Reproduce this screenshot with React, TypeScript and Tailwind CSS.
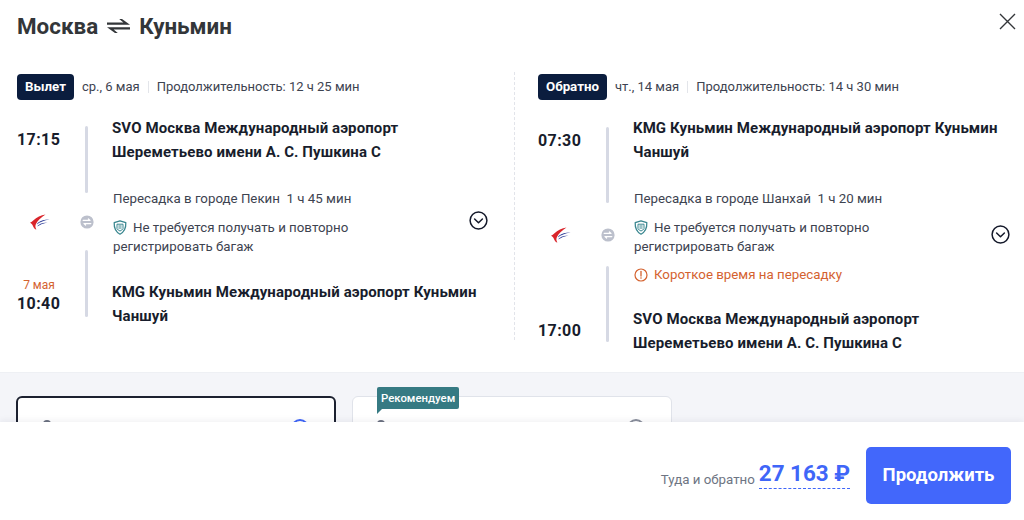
import React from "react";

function SwallowLogo() {
  return (
    <svg width="20" height="16" viewBox="0 0 20 16" className="block">
      <path d="M15.5 0.5C11 1.4 6.5 3.2 3.5 6.2C2.4 7.3 1.2 8.2 0 8.8C1.2 9.4 2.4 10.6 3.2 12.4C3.8 13.8 4.8 15 6.4 15.6C5.2 13.8 5 11.6 6.2 9.6C7.8 6.6 11 3.4 15.5 0.5Z" fill="#d9252b" />
      <path d="M19.5 5.4C15.4 5.2 11 6.2 8.2 8.4C7.4 9 7 9.8 6.8 10.4C9.8 8 14 6.2 19.5 5.4Z" fill="#2b3a97" />
      <path d="M17.5 8.6C14.4 8.6 11 9.4 8.6 11C8 11.4 7.6 11.8 7.4 12.4C10 10.8 13.6 9.4 17.5 8.6Z" fill="#2b3a97" />
    </svg>
  );
}

function Shield() {
  return (
    <svg width="14" height="15" viewBox="0 0 14 15" fill="none" className="block shrink-0">
      <path d="M7 0.8L12.8 2.6C13 6.8 12.2 11.4 7 14.2C1.8 11.4 1 6.8 1.2 2.6L7 0.8Z" stroke="#3a8790" strokeWidth="1.3" strokeLinejoin="round" />
      <path d="M4 4.2H10V8.6C9.4 9.8 8.2 10.6 7 11C5.8 10.6 4.6 9.8 4 8.6V4.2Z" stroke="#3a8790" strokeWidth="1" />
      <path d="M5.4 6H8.6M5.4 8H8.6" stroke="#3a8790" strokeWidth="1" />
    </svg>
  );
}

function SwapDot() {
  return (
    <svg width="14" height="14" viewBox="0 0 14 14" className="block">
      <circle cx="7" cy="7" r="6.6" fill="#bcc0cc" />
      <path d="M3.2 5.4H10M10 5.4L8.4 4M10.8 8.6H4M4 8.6L5.6 10" stroke="#fff" strokeWidth="1.2" fill="none" strokeLinecap="round" />
    </svg>
  );
}

function Chevron() {
  return (
    <svg width="19" height="19" viewBox="0 0 19 19" fill="none" className="block">
      <circle cx="9.5" cy="9.5" r="8.4" stroke="#14192a" strokeWidth="1.5" />
      <path d="M5.6 8L9.5 11.8L13.4 8" stroke="#14192a" strokeWidth="1.5" strokeLinecap="round" strokeLinejoin="round" />
    </svg>
  );
}

function Warn() {
  return (
    <svg width="14" height="14" viewBox="0 0 14 14" fill="none" className="block shrink-0">
      <circle cx="7" cy="7" r="6" stroke="#d4622f" strokeWidth="1.2" />
      <path d="M7 3.5V8" stroke="#d4622f" strokeWidth="1.3" strokeLinecap="round" />
      <circle cx="7" cy="10" r="0.8" fill="#d4622f" />
    </svg>
  );
}

function Head({ badge, date, dur }: { badge: string; date: string; dur: string }) {
  return (
    <div className="flex items-center h-[26px] text-[13px] leading-[20px] text-[#3d4350] whitespace-nowrap">
      <span className="h-[26px] px-[8px] flex items-center rounded-[4px] bg-[#0b1d3e] text-white font-bold text-[13.3px]">{badge}</span>
      <span className="ml-[8px]">{date}</span>
      <span className="w-px h-[12px] bg-[#e3e5ea] mx-[8px]" />
      <span>{dur}</span>
    </div>
  );
}

const place = "text-[15px] leading-[24px] font-bold text-[#181d2c] whitespace-nowrap tracking-[0.1px]";
const time = "text-[16px] leading-[24px] font-bold text-[#181d2c] tracking-[0.4px]";
const note = "text-[13.3px] leading-[19px] text-[#3d4350] whitespace-nowrap";
const bar = "w-[3px] rounded-full bg-[#d6d9e4]";

export default function App() {
  return (
    <div className="relative h-[520px] w-[1024px] overflow-hidden bg-white font-[Roboto,sans-serif]">
      <div className="flex items-center justify-between h-[56px] pl-[17px] pr-[8px] pb-[4px]">
        <div className="flex items-center text-[22.4px] leading-[30px] font-bold text-[#333639]">
          <span>Москва</span>
          <svg width="23" height="14" viewBox="0 0 23 14" className="mx-[9px] block">
            <path d="M0 5.8H23L15 0H12.2L16.4 3.6H0Z" fill="#333639" />
            <path d="M23 8.2H0L8 14H10.8L6.6 10.4H23Z" fill="#333639" />
          </svg>
          <span>Куньмин</span>
        </div>
        <svg width="17" height="17" viewBox="0 0 17 17" className="block -mt-[10px]">
          <path d="M1 1L16 16M16 1L1 16" stroke="#333639" strokeWidth="1.4" />
        </svg>
      </div>

      <div className="flex h-[316px] pt-[18px]">
        <div className="w-[497px] ml-[17px]">
          <Head badge="Вылет" date="ср., 6 мая" dur="Продолжительность: 12 ч 25 мин" />
          <div className="flex mt-[16px]">
            <div className="w-[68px] flex flex-col">
              <div className={`${time} mt-[12px]`}>17:15</div>
              <div className="mt-[62px] ml-[13px]"><SwallowLogo /></div>
              <div className="mt-[47px] text-[12px] leading-[16px] text-[#d4622f] text-center w-[44px]">7 мая</div>
              <div className={`${time} -mt-px`}>10:40</div>
            </div>
            <div className="w-[27px] flex flex-col">
              <div className={`${bar} h-[67px] mt-[10px]`} />
              <div className="mt-[22px] -ml-[5px]"><SwapDot /></div>
              <div className={`${bar} h-[67px] mt-[21px]`} />
            </div>
            <div className="w-[357px]">
              <div className={place}>SVO Москва Международный аэропорт<br />Шереметьево имени А. С. Пушкина С</div>
              <div className={`${note} mt-[25px] pl-px`}>Пересадка в городе Пекин&nbsp; 1 ч 45 мин</div>
              <div className={`${note} mt-[10px] pl-px`}>
                <div className="flex items-center gap-[6px]"><Shield /><span>Не требуется получать и повторно</span></div>
                <div>регистрировать багаж</div>
              </div>
              <div className={`${place} mt-[24px]`}>KMG Куньмин Международный аэропорт Куньмин<br />Чаншуй</div>
            </div>
            <div className="pt-[95px]"><Chevron /></div>
          </div>
        </div>

        <div className="w-[24px] border-l border-dashed border-[#e2e4ea] h-[268px] -mt-[2px]" />

        <div className="w-[486px]">
          <Head badge="Обратно" date="чт., 14 мая" dur="Продолжительность: 14 ч 30 мин" />
          <div className="flex mt-[16px]">
            <div className="w-[68px] flex flex-col">
              <div className={`${time} mt-[13px]`}>07:30</div>
              <div className="mt-[74px] ml-[13px]"><SwallowLogo /></div>
              <div className={`${time} mt-[76px]`}>17:00</div>
            </div>
            <div className="w-[27px] flex flex-col">
              <div className={`${bar} h-[76px] mt-[11px]`} />
              <div className="mt-[25px] -ml-[5px]"><SwapDot /></div>
              <div className={`${bar} h-[76px] mt-[24px]`} />
            </div>
            <div className="w-[358px]">
              <div className={place}>KMG Куньмин Международный аэропорт Куньмин<br />Чаншуй</div>
              <div className={`${note} mt-[25px] pl-px`}>Пересадка в городе Шанхай&nbsp; 1 ч 20 мин</div>
              <div className={`${note} mt-[10px] pl-px`}>
                <div className="flex items-center gap-[6px]"><Shield /><span>Не требуется получать и повторно</span></div>
                <div>регистрировать багаж</div>
              </div>
              <div className={`${note} mt-[9px] pl-px flex items-center gap-[6px] !text-[#d4622f]`}><Warn /><span>Короткое время на пересадку</span></div>
              <div className={`${place} mt-[23px]`}>SVO Москва Международный аэропорт<br />Шереметьево имени А. С. Пушкина С</div>
            </div>
            <div className="pt-[109px]"><Chevron /></div>
          </div>
        </div>
      </div>

      <div className="h-[148px] bg-[#f4f5f9] border-t border-[#eef0f4] pt-[23px] pl-[16px] flex gap-[16px]">
        <div className="relative w-[320px] h-[120px] rounded-[6px] border-2 border-[#1c2130] bg-white">
          <span className="absolute left-[25px] top-[22px] w-[8px] h-[8px] rounded-full bg-[#6b7180]" />
          <span className="absolute left-[273px] top-[21px] w-[18px] h-[18px] rounded-full border-2 border-[#3f66f8]" />
        </div>
        <div className="relative w-[320px] h-[120px] rounded-[6px] border border-[#e0e3ea] bg-white">
          <span className="absolute left-[24px] top-[23px] w-[8px] h-[8px] rounded-full bg-[#6b7180]" />
          <span className="absolute left-[274px] top-[22px] w-[18px] h-[18px] rounded-full border-2 border-[#8a8f9c]" />
          <div className="absolute left-[24px] -top-[10px] h-[22px] px-[4px] flex items-center rounded-[2px] rounded-bl-none bg-[#367a83] text-white text-[11.4px] leading-[16px] font-medium">Рекомендуем</div>
          <svg width="5" height="5" viewBox="0 0 5 5" className="absolute left-[24px] top-[12px] block"><path d="M0 0H5L0 5Z" fill="#367a83" /></svg>
        </div>
      </div>

      <div className="absolute left-0 right-0 bottom-0 h-[98px] bg-white shadow-[0_-2px_6px_rgba(30,40,70,0.06)] flex items-center justify-end pr-[13px] pt-[9px]">
        <span className="text-[13.3px] leading-[20px] text-[#6e7583] mt-[9px]">Туда и обратно</span>
        <span className="ml-[4px] text-[22.4px] leading-[30px] font-bold text-[#3f66f8] border-b border-dashed border-[#3f66f8] -mt-[5px]">27 163 ₽</span>
        <button className="ml-[16px] w-[145px] h-[57px] rounded-[5px] bg-[#4267fb] text-white text-[18.5px] font-bold">Продолжить</button>
      </div>
    </div>
  );
}
